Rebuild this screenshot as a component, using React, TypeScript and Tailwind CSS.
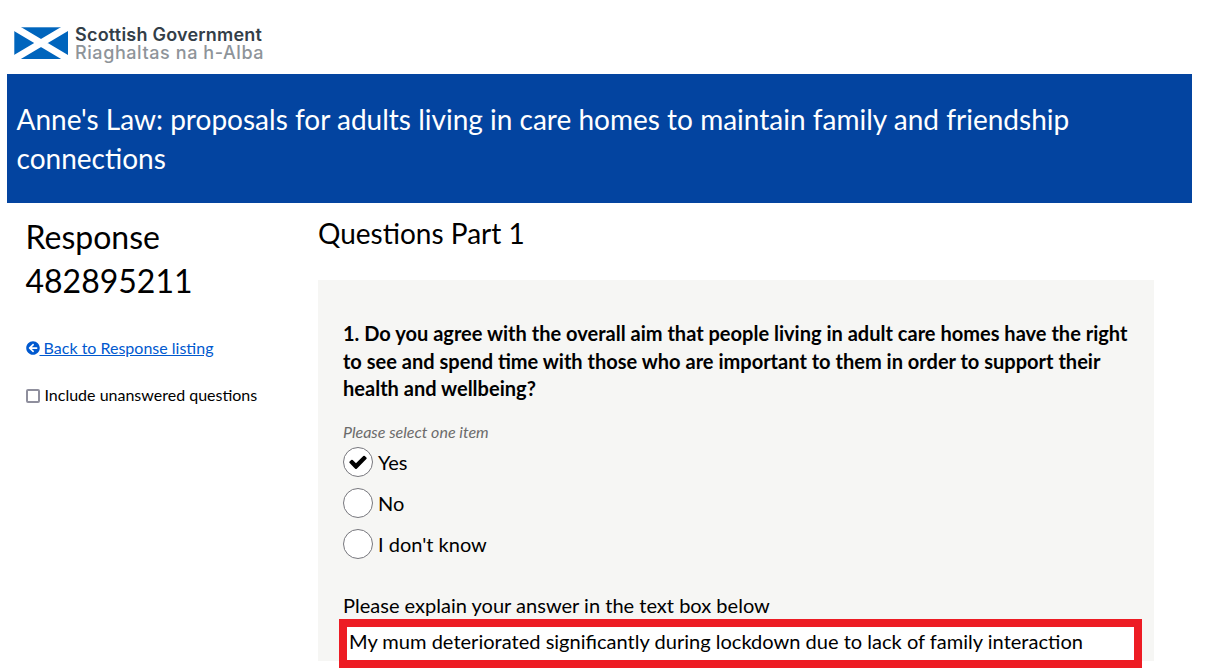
import { FC } from "react";
import { FaArrowCircleLeft } from "react-icons/fa";

type OptionType = {
  label: string;
  checked?: boolean;
};

const options: OptionType[] = [
  { label: "Yes", checked: true },
  { label: "No" },
  { label: "I don't know" },
];

const Saltire = () => (
  <svg width="54" height="32" viewBox="0 0 54 32" className="mt-[1px]">
    <rect x="0.3" y="0.3" width="53.7" height="31.7" fill="#0065bd" />
    <path d="M0 0L54 32M54 0L0 32" stroke="#fff" strokeWidth="7" />
  </svg>
);

const Check = () => (
  <svg width="20" height="20" viewBox="0 0 1792 1792" fill="currentColor">
    <path d="M1671 566q0 40-28 68l-724 724-136 136q-28 28-68 28t-68-28l-136-136-362-362q-28-28-28-68t28-68l136-136q28-28 68-28t68 28l294 295 656-657q28-28 68-28t68 28l136 136q28 28 28 68z" />
  </svg>
);

const Option: FC<OptionType> = ({ label, checked }) => (
  <label className="flex h-[30px] items-center gap-[5px]">
    <span className="flex size-[30px] items-center justify-center rounded-full border border-[#77777d] bg-white">
      {checked && <Check />}
    </span>
    <span className="text-[20px] leading-[28px]">{label}</span>
  </label>
);

export default function App() {
  return (
    <div className="h-[670px] w-[1213px] overflow-hidden bg-white pl-[7px] font-['Lato',sans-serif] text-black">
      <header className="flex h-[74px] gap-[7px] pt-[26px] pl-[7px]">
        <Saltire />
        <div className="font-['Inter',sans-serif] text-[18px] leading-[18px] font-semibold">
          <p className="tracking-[0.22px] text-[#333e48]">
            Scottish Government
          </p>
          <p className="font-medium tracking-[0.58px] text-[#8e9499]">
            Riaghaltas na h-Alba
          </p>
        </div>
      </header>

      <div className="h-[129px] w-[1185px] bg-[#0344a0] px-[9.5px] pt-[26px]">
        <h1 className="text-[28.02px] leading-[39px] text-white">
          Anne's Law: proposals for adults living in care homes to maintain
          family and friendship
          <br />
          connections
        </h1>
      </div>

      <div className="flex">
        <aside className="w-[311px] pt-[12px] pl-[18.5px]">
          <h2 className="text-[32px] leading-[44px]">
            Response
            <br />
            482895211
          </h2>
          <a
            href="#"
            className="mt-[34px] flex h-[22px] items-center text-[16px] text-[#0059cf]"
          >
            <FaArrowCircleLeft className="size-[14px]" />
            <span className="whitespace-pre underline"> Back to Response listing</span>
          </a>
          <label className="mt-[25px] flex h-[22px] items-center gap-[5px] text-[16px]">
            <span className="mt-px size-[14px] rounded-[2px] border-2 border-[#8f8f9d] bg-white" />
            Include unanswered questions
          </label>
        </aside>

        <main className="w-[836px]">
          <h2 className="pt-[11px] text-[28px] leading-[39px]">
            Questions Part 1
          </h2>
          <section className="mt-[27px] h-[381px] bg-[#f6f6f4] px-[25px] pt-[40px]">
            <p className="text-[20.04px] leading-[27.5px] font-bold whitespace-nowrap">
              1. Do you agree with the overall aim that people living in adult
              care homes have the right
              <br />
              to see and spend time with those who are important to them in
              order to support their
              <br />
              health and wellbeing?
            </p>
            <p className="mt-[17px] h-[24px] text-[16px] leading-[24px] text-[#6b6b6b] italic">
              Please select one item
            </p>
            <div className="mt-[3px] flex flex-col gap-[11px]">
              {options.map((option) => (
                <Option key={option.label} {...option} />
              ))}
            </div>
            <p className="mt-[33px] text-[20.04px] leading-[27px]">
              Please explain your answer in the text box below
            </p>
            <div className="-ml-[4px] h-[49px] w-[803px] border-8 border-[#ed1c24] bg-white pl-[2px] text-[20.06px] leading-[29px] whitespace-nowrap">
              My mum deteriorated significantly during lockdown due to lack of
              family interaction
            </div>
          </section>
        </main>
      </div>
    </div>
  );
}
